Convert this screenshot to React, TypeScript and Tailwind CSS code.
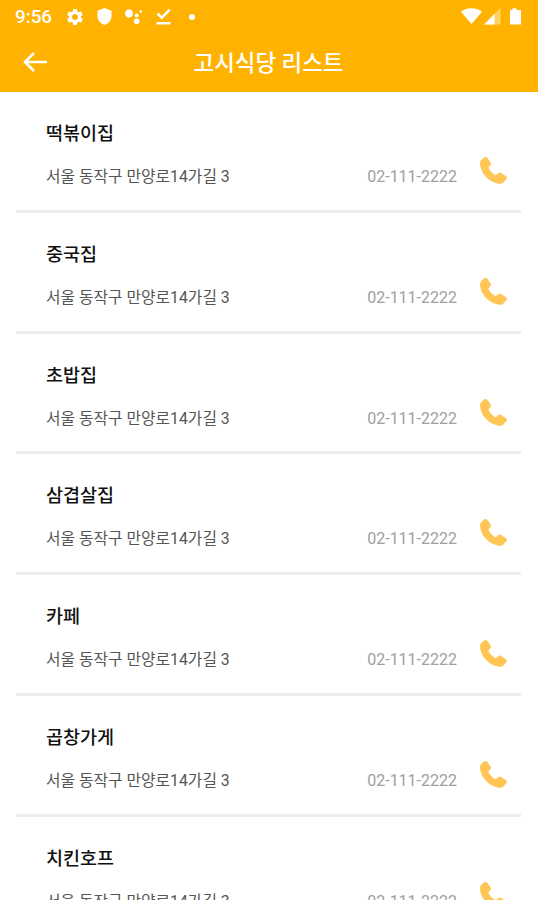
import React from "react";
import { MdSettings } from "react-icons/md";

const ADDRESS = "서울 동작구 만양로14가길 3";
const PHONE = "02-111-2222";

const restaurants = [
  "떡볶이집",
  "중국집",
  "초밥집",
  "삼겹살집",
  "카페",
  "곱창가게",
  "치킨호프",
].map((name) => ({ name, address: ADDRESS, phone: PHONE }));

function PhoneIcon() {
  return (
    <svg viewBox="0 0 27 27" className="h-[27px] w-[27px]" fill="#ffc655">
      <path d="M1 3.2 3.6.8C5 -.2 6.600 -.2 7.500 1L10.600 5.400C11.300 6.600 11.100 7.700 10.200 8.600L8.300 10.500C9.600 13.800 12.600 16.900 16 18.200L17.900 16.300C18.800 15.500 19.800 15.300 20.900 15.900L25.800 18.900C27 19.700 27.200 21 26.300 22.200L23.400 25.500C22 26.900 20 27.100 17.800 26.600 9 24.600 2 17.800.3 9.300 -.2 6.800 0 4.500 1 3.200Z" />
    </svg>
  );
}

function StatusBar() {
  return (
    <div className="flex h-[33px] items-center pl-[15px] pr-[17px]">
      <span className="w-[50px] pt-[1px] text-[18.8px] font-medium leading-none">
        9:56
      </span>
      <MdSettings className="h-[20px] w-[20px]" />
      <svg viewBox="0 0 14 17" className="ml-[12px] h-[17px] w-[15px]" fill="currentColor">
        <path d="M7 0 14 2.7V8c0 4.2-2.7 7.4-7 9-4.3-1.6-7-4.8-7-9V2.7Z" />
      </svg>
      <svg viewBox="0 0 18 17" className="ml-[13px] h-[17px] w-[18px]" fill="currentColor">
        <circle cx="4" cy="5.5" r="3.9" />
        <circle cx="11.7" cy="7.5" r="2.1" />
        <circle cx="11.7" cy="13.3" r="2.8" />
        <circle cx="15.8" cy="3.6" r="1.3" />
      </svg>
      <svg
        viewBox="0 0 15 17"
        className="ml-[13px] h-[17px] w-[15px]"
        fill="none"
        stroke="currentColor"
        strokeWidth="2.5"
      >
        <path d="M1.5 5.5 5.8 9.8 13.6 1.6M.5 15.2h14" />
      </svg>
      <span className="ml-[18px] h-[6px] w-[6px] rounded-full bg-white" />

      <svg viewBox="0 0 60 18" className="ml-auto h-[18px] w-[60px]" fill="currentColor">
        <path d="M0 3.7C6-.9 15-.9 21 3.7L10.5 16Z" />
        <path d="M23 16.5 39.5 0v16.5Z" opacity=".4" />
        <path d="M23 16.5 33.5 6v10.5Z" />
        <path d="M49 2h2.5V.2h4V2H60V16.5H49Z" />
      </svg>
    </div>
  );
}

export default function App() {
  return (
    <div className="flex h-[900px] w-[538px] flex-col overflow-hidden bg-white font-['Roboto','Noto_Sans_CJK_KR',sans-serif]">
      <header className="h-[91.5px] shrink-0 bg-[#ffb300] text-white">
        <StatusBar />
        <div className="flex h-[58px] items-center px-[23px]">
          <svg
            viewBox="0 0 24 20"
            className="h-[20px] w-[24px]"
            fill="none"
            stroke="currentColor"
            strokeWidth="2.6"
          >
            <path d="M24 10H2M11 1 2 10l9 9" />
          </svg>
          <h1 className="flex-1 pr-[25px] pt-[2px] text-center text-[22.4px] font-medium leading-none">
            고시식당 리스트
          </h1>
        </div>
      </header>

      <ul className="shrink-0 pl-[16px] pr-[17px] pt-[0.5px]">
        {restaurants.map(({ name, address, phone }) => (
          <li
            key={name}
            className="h-[120.75px] border-b-3 border-[#eeeeee] pl-[30px] pr-[14px] pt-[29px]"
          >
            <h2 className="text-[18.5px] font-medium leading-[26px] text-[#111111]">{name}</h2>
            <div className="mt-[11px] flex h-[38px] items-center">
              <span className="text-[15.8px] text-[#555555]">{address}</span>
              <span className="ml-auto mr-[23px] text-[16px] text-[#a0a0a0]">{phone}</span>
              <div className="-mt-[13px]">
                <PhoneIcon />
              </div>
            </div>
          </li>
        ))}
      </ul>
    </div>
  );
}
